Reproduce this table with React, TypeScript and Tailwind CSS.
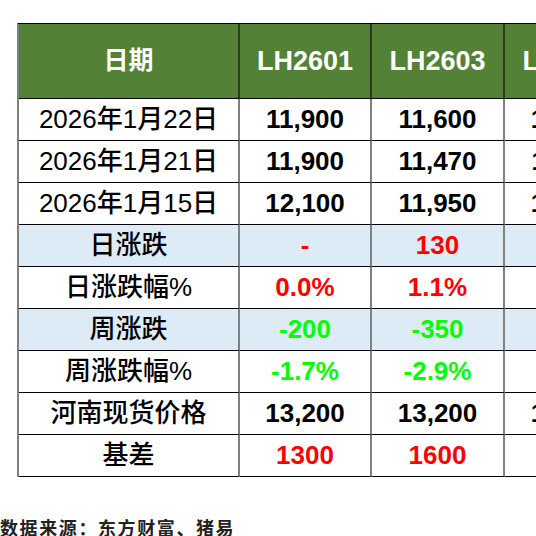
const RED = "text-[#ff0000]";
const GREEN = "text-[#00ff00]";

type Cell = { v: string; c?: string };
type Row = { label: string; blue?: boolean; cells: Cell[] };

const rows: Row[] = [
  { label: "2026年1月22日", cells: [{ v: "11,900" }, { v: "11,600" }, { v: "12,085" }] },
  { label: "2026年1月21日", cells: [{ v: "11,900" }, { v: "11,470" }, { v: "11,990" }] },
  { label: "2026年1月15日", cells: [{ v: "12,100" }, { v: "11,950" }, { v: "12,390" }] },
  { label: "日涨跌", blue: true, cells: [{ v: "-", c: RED }, { v: "130", c: RED }, { v: "95", c: RED }] },
  { label: "日涨跌幅%", cells: [{ v: "0.0%", c: RED }, { v: "1.1%", c: RED }, { v: "0.8%", c: RED }] },
  { label: "周涨跌", blue: true, cells: [{ v: "-200", c: GREEN }, { v: "-350", c: GREEN }, { v: "-305", c: GREEN }] },
  { label: "周涨跌幅%", cells: [{ v: "-1.7%", c: GREEN }, { v: "-2.9%", c: GREEN }, { v: "-2.5%", c: GREEN }] },
  { label: "河南现货价格", cells: [{ v: "13,200" }, { v: "13,200" }, { v: "13,200" }] },
  { label: "基差", cells: [{ v: "1300", c: RED }, { v: "1600", c: RED }, { v: "1115", c: RED }] },
];

const headers = ["LH2601", "LH2603", "LH2605"];

export default function App() {
  return (
    <div
      className="w-[536px] h-[536px] overflow-hidden bg-white"
      style={{ fontFamily: '"Liberation Sans", "Noto Sans CJK SC", sans-serif' }}
    >
      <div className="pt-[23px] pl-[17px] w-[700px]">
        <div className="grid grid-cols-[221px_132px_133px_133px] border-t border-black border-l-2 border-l-[#808080]">
          {/* header */}
          <div className="h-[75px] flex items-center justify-center bg-[#538135] text-white text-[25px] font-bold border-b border-b-black border-r-2 border-r-[#2f3a26]">
            日期
          </div>
          {headers.map((h) => (
            <div
              key={h}
              className="h-[75px] flex items-center justify-center bg-[#538135] text-white text-[27px] font-bold border-b border-b-black border-r-2 border-r-[#2f3a26]"
            >
              {h}
            </div>
          ))}

          {rows.map((r) => (
            <Line key={r.label} row={r} />
          ))}
        </div>
      </div>

      <div
        className="mt-[41px] text-[18px] leading-[18px] tracking-[1.6px] font-semibold text-[#222]"
        style={{ fontFamily: '"Noto Sans CJK SC", sans-serif' }}
      >
        数据来源：东方财富、猪易
      </div>
    </div>
  );
}

function Line({ row }: { row: Row }) {
  const bg = row.blue ? "bg-[#ddebf7]" : "bg-white";
  const base = `h-[42px] flex items-center justify-center border-b border-b-black border-r-2 border-r-[#808080] ${bg}`;
  return (
    <>
      <div className={`${base} text-[26px] font-medium text-black`}>{row.label}</div>
      {row.cells.map((c, i) => (
        <div key={i} className={`${base} text-[26px] font-bold ${c.c ?? "text-black"}`}>
          {c.v}
        </div>
      ))}
    </>
  );
}
